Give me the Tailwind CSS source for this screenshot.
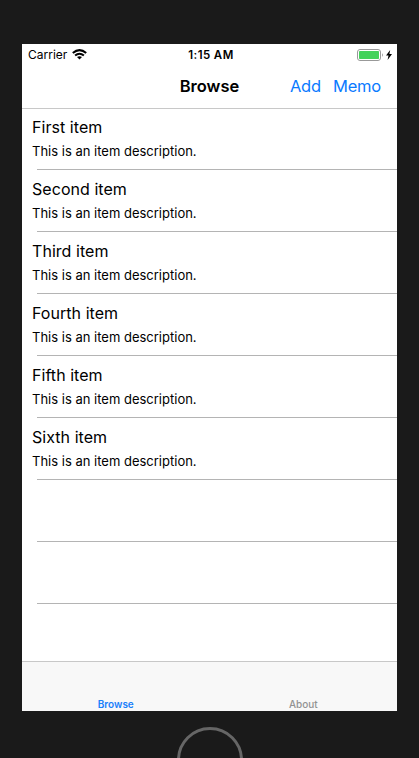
<!DOCTYPE html>
<html lang="en">
<head>
<meta charset="utf-8">
<title>Browse</title>
<script src="https://cdn.jsdelivr.net/npm/@tailwindcss/browser@4"></script>
</head>
<body class="flex h-[758px] w-[419px] flex-col items-center overflow-hidden bg-[#1a1a1a] pt-[44px] font-[Inter,sans-serif] text-black">
<main class="flex h-[667px] w-[375px] shrink-0 flex-col bg-white">
  <div class="grid h-5 shrink-0 grid-cols-3 items-center px-[5px] text-[12px] leading-5">
    <div class="flex items-center gap-[5px] pl-px"><span class="pt-px">Carrier</span>
      <svg class="h-[11px] w-[15px]" viewBox="0 0 15 11"><g fill="none" stroke="#000" stroke-width="2"><path d="M.8 4.1Q7.5-1.9 14.2 4.1"/><path d="M3.1 6.6Q7.5 2.8 11.9 6.6"/></g><path d="M5 8.1Q7.5 6.2 10 8.1L7.5 10.6Z"/></svg>
    </div>
    <div class="pl-[3px] pt-px text-center text-[11.5px] font-semibold tracking-[0.4px]">1:15 AM</div>
    <div class="flex items-center justify-end gap-[2px]">
      <svg class="h-[12px] w-[27px]" viewBox="0 0 27 12"><rect x=".5" y=".5" width="23" height="11" rx="2.5" fill="none" stroke="#999"/><rect x="2" y="2" width="20" height="8" rx=".8" fill="#43d25b"/><path d="M25 4Q26.8 6 25 8Z" fill="#888"/></svg>
      <svg class="h-[10px] w-[6px]" viewBox="0 0 6 10"><path d="M4.2 0 0 5.6H2.5L1.6 10 6 4.1H3.4Z"/></svg>
    </div>
  </div>
  <header class="grid h-[45px] shrink-0 grid-cols-3 items-center border-b border-[#c8c8c8] px-4 pt-px text-[16.5px]">
    <h1 class="col-start-2 text-center font-semibold">Browse</h1>
    <div class="flex justify-end gap-[12px] tracking-[-0.2px] text-[#0a7aff]"><span>Add</span><span>Memo</span></div>
  </header>
  <ul id="items" class="-mt-px flex-1"></ul>
  <nav class="grid h-[50px] shrink-0 grid-cols-2 items-end border-t border-[#c8c8c8] bg-[#f8f8f8] pb-px text-center text-[10px] leading-[12px]">
    <span class="font-semibold text-[#1a80fb]">Browse</span><span class="font-medium text-[#929292]">About</span>
  </nav>
</main>
<div class="mt-4 size-[66px] shrink-0 rounded-full border-[3px] border-[#666]"></div>
<script>
const names = ["First item", "Second item", "Third item", "Fourth item", "Fifth item", "Sixth item", "", ""];
document.getElementById("items").innerHTML = names.map(n => `<li class="flex h-[62px] flex-col"><div class="flex-1 pl-[10px] pt-[9px]">${n ? `<p class="text-[16px] leading-5 tracking-[0.05px]">${n}</p><p class="mt-[6px] text-[13px] leading-4">This is an item description.</p>` : ""}</div><div class="ml-[15px] h-px bg-[#b4b4b4]"></div></li>`).join("");
</script>
</body>
</html>
